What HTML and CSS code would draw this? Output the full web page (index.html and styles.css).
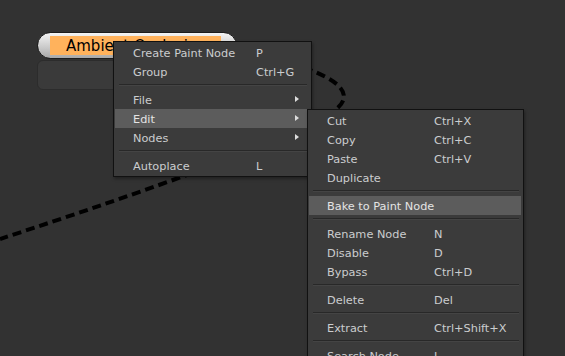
FILE: index.html
```html
<!DOCTYPE html>
<html lang="en">
<head>
    <meta charset="UTF-8">
    <title>Node Graph</title>
    <link rel="stylesheet" href="styles.css">
</head>
<body>
    <div class="canvas">
        <svg class="wires" width="565" height="356" viewBox="0 0 565 356">
            <path d="M 236 50 C 305 64, 373 86, 331 113 C 290 140, 150 190, 0 239"
                  fill="none" stroke="#000" stroke-width="4" stroke-dasharray="9 5"/>
        </svg>

        <div class="node">
            <div class="node-head">
                <span class="node-label">Ambient Occlusion</span>
            </div>
            <div class="node-body"></div>
        </div>

        <!-- context menu -->
        <div class="menu main-menu">
            <div class="item"><span>Create Paint Node</span><span>P</span></div>
            <div class="item"><span>Group</span><span>Ctrl+G</span></div>
            <div class="sep"></div>
            <div class="item sub"><span>File</span><span></span></div>
            <div class="item sub active"><span>Edit</span><span></span></div>
            <div class="item sub"><span>Nodes</span><span></span></div>
            <div class="sep"></div>
            <div class="item"><span>Autoplace</span><span>L</span></div>
        </div>

        <!-- Edit submenu -->
        <div class="menu edit-menu">
            <div class="item"><span>Cut</span><span>Ctrl+X</span></div>
            <div class="item"><span>Copy</span><span>Ctrl+C</span></div>
            <div class="item"><span>Paste</span><span>Ctrl+V</span></div>
            <div class="item"><span>Duplicate</span><span></span></div>
            <div class="sep"></div>
            <div class="item active"><span>Bake to Paint Node</span><span></span></div>
            <div class="sep"></div>
            <div class="item"><span>Rename Node</span><span>N</span></div>
            <div class="item"><span>Disable</span><span>D</span></div>
            <div class="item"><span>Bypass</span><span>Ctrl+D</span></div>
            <div class="sep"></div>
            <div class="item"><span>Delete</span><span>Del</span></div>
            <div class="sep"></div>
            <div class="item"><span>Extract</span><span>Ctrl+Shift+X</span></div>
            <div class="sep"></div>
            <div class="item"><span>Search Node</span><span>J</span></div>
        </div>
    </div>
</body>
</html>
```

FILE: styles.css
```css
body {
    margin: 0;
    background: #323232;
    font-family: "DejaVu Sans", Verdana, sans-serif;
    overflow: hidden;
}
.canvas {
    position: relative;
    width: 565px;
    height: 356px;
    overflow: hidden;
    background: #323232;
}
.wires {
    position: absolute;
    left: 0;
    top: 0;
}

/* node */
.node {
    position: absolute;
    left: 37px;
    top: 32px;
    width: 200px;
}
.node-head {
    box-sizing: border-box;
    height: 27px;
    border: 1px solid #1c1c1c;
    border-radius: 14px;
    background: linear-gradient(#f4f4f4, #c8c8c8 60%, #a8a8a8);
    padding: 3px 15px 0 12px;
}
.node-label {
    display: block;
    height: 19px;
    background: #ffb25c;
    color: #000;
    font-size: 15px;
    line-height: 20px;
    padding-left: 16px;
}
.node-body {
    margin-top: 1px;
    height: 28px;
    border: 1px solid #2c2c2c;
    border-radius: 6px;
    background: #3a3a3a;
}

/* menus */
.menu {
    position: absolute;
    background: #3b3b3b;
    border: 1px solid #111;
    box-shadow: 1px 2px 3px rgba(0, 0, 0, 0.35);
    padding: 1px 2px 1px 1px;
    font-size: 11.3px;
    color: #cbcdcf;
}
.main-menu {
    left: 113px;
    top: 41px;
    width: 194px;
}
.edit-menu {
    left: 307px;
    top: 109px;
    width: 212px;
}
.item {
    display: grid;
    height: 18px;
    padding-top: 1px;
    line-height: 19px;
    padding-left: 18px;
    white-space: nowrap;
    position: relative;
}
.main-menu .item { grid-template-columns: 123px 1fr; }
.edit-menu .item { grid-template-columns: 107px 1fr; }
.item.active {
    background: #5c5c5c;
    color: #e4e4e4;
}
.item.sub::after {
    content: "";
    position: absolute;
    right: 10px;
    top: 6px;
    border-left: 4px solid #dcdcdc;
    border-top: 3.5px solid transparent;
    border-bottom: 3.5px solid transparent;
}
.sep {
    height: 0;
    margin: 3px 2px 4px 4px;
    border-top: 1px solid #282828;
    border-bottom: 1px solid #444;
}
```
